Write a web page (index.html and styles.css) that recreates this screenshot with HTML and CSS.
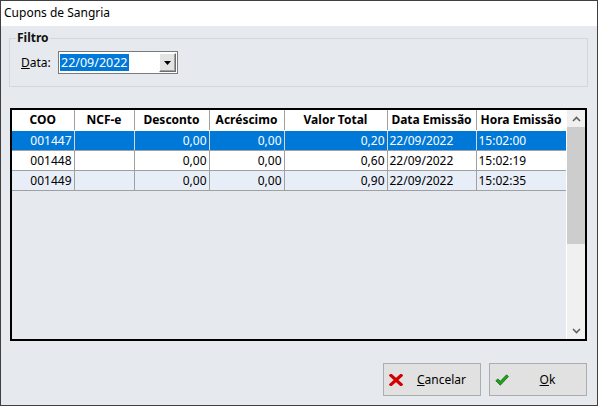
FILE: index.html
```html
<!DOCTYPE html>
<html lang="pt-BR">
<head>
<meta charset="utf-8">
<title>Cupons de Sangria</title>
<link rel="stylesheet" href="styles.css">
</head>
<body>
<div class="window">
  <div class="titlebar">Cupons de Sangria</div>
  <fieldset class="filter">
    <legend>Filtro</legend>
    <div class="field">
      <label class="label"><u>D</u>ata:</label>
      <div class="combo">
        <div class="combo-text"><span class="sel">22/09/2022</span></div>
        <div class="combo-btn">
          <svg width="7" height="4" viewBox="0 0 7 4"><path d="M0 0H7L3.5 4Z" fill="#000"/></svg>
        </div>
      </div>
    </div>
  </fieldset>
  <div class="grid">
    <div class="grid-body">
      <table class="table">
        <colgroup>
          <col class="c1"><col class="c2"><col class="c3"><col class="c4"><col class="c5"><col class="c6"><col class="c7">
        </colgroup>
        <thead>
          <tr>
            <th>COO</th><th>NCF-e</th><th>Desconto</th><th>Acréscimo</th><th>Valor Total</th><th>Data Emissão</th><th>Hora Emissão</th>
          </tr>
        </thead>
        <tbody>
          <tr class="selected">
            <td class="r">001447</td><td></td><td class="r">0,00</td><td class="r">0,00</td><td class="r">0,20</td><td>22/09/2022</td><td>15:02:00</td>
          </tr>
          <tr>
            <td class="r">001448</td><td></td><td class="r">0,00</td><td class="r">0,00</td><td class="r">0,60</td><td>22/09/2022</td><td>15:02:19</td>
          </tr>
          <tr class="alt">
            <td class="r">001449</td><td></td><td class="r">0,00</td><td class="r">0,00</td><td class="r">0,90</td><td>22/09/2022</td><td>15:02:35</td>
          </tr>
        </tbody>
      </table>
    </div>
    <div class="scrollbar">
      <div class="arrow">
        <svg width="9" height="6" viewBox="0 0 9 6"><path d="M1 5L4.5 1.5L8 5" fill="none" stroke="#606060" stroke-width="1.6"/></svg>
      </div>
      <div class="track"><div class="thumb"></div></div>
      <div class="arrow">
        <svg width="9" height="6" viewBox="0 0 9 6"><path d="M1 1L4.5 4.5L8 1" fill="none" stroke="#606060" stroke-width="1.6"/></svg>
      </div>
    </div>
  </div>
  <div class="buttons">
    <button class="btn" type="button">
      <svg class="icon" width="14" height="12" viewBox="0 0 14 12">
        <path d="M2 1.5L12 10.5M12 1.5L2 10.5" stroke="#d40000" stroke-width="3.2" stroke-linecap="square"/>
      </svg>
      <span class="btn-label"><u>C</u>ancelar</span>
    </button>
    <button class="btn" type="button">
      <svg class="icon" width="14" height="12" viewBox="0 0 14 12">
        <path d="M0.8 6.8L3 4.9L5.3 7.3L11.6 0.8L13.4 2.6L5.3 11.2Z" fill="#22a022" stroke="#0b6e0b" stroke-width="0.8" stroke-linejoin="round"/>
      </svg>
      <span class="btn-label"><u>O</u>k</span>
    </button>
  </div>
</div>
</body>
</html>
```

FILE: styles.css
```css
html, body {
  margin: 0;
  padding: 0;
}

body {
  font-family: "Noto Sans", "Open Sans", sans-serif;
  font-size: 12px;
  color: #000;
  background: #e6e9ee;
}

.window {
  width: 598px;
  height: 406px;
  box-sizing: border-box;
  border: 1px solid #404040;
  background: #e6e9ee;
  display: flex;
  flex-direction: column;
  overflow: hidden;
}

.titlebar {
  height: 25px;
  line-height: 24px;
  background: #fff;
  padding-left: 3px;
  font-size: 12px;
  color: #000;
}

.filter {
  margin: 5px 9px 0 8px;
  padding: 6px 11px 12px 11px;
  border: 1px solid #d3d6da;
  min-width: 0;
}

.filter legend {
  font-weight: bold;
  font-size: 12px;
  line-height: 14px;
  padding: 0 1px;
  margin-left: -5px;
  color: #111;
}

.field {
  display: flex;
  align-items: center;
}

.label {
  width: 37px;
  line-height: 16px;
  padding-top: 1px;
}

.combo {
  width: 120px;
  height: 23px;
  box-sizing: border-box;
  border: 1px solid #7a7a7a;
  background: #fff;
  display: flex;
  align-items: center;
  padding: 1px;
}

.combo-text {
  flex: 1;
  display: flex;
  align-items: center;
  padding-left: 0;
}

.sel {
  background: #0078d7;
  color: #fff;
  line-height: 17px;
  padding: 0 1px 0 1px;
  font-size: 12.5px;
}

.combo-btn {
  width: 17px;
  height: 19px;
  box-sizing: border-box;
  background: #e3e3e3;
  border-top: 1px solid #fff;
  border-left: 1px solid #fff;
  border-right: 1px solid #6d6d6d;
  border-bottom: 1px solid #6d6d6d;
  box-shadow: inset -1px -1px 0 #a0a0a0;
  display: flex;
  align-items: center;
  justify-content: center;
}

.grid {
  margin: 21px 10px 0 9px;
  height: 233px;
  box-sizing: border-box;
  border: 2px solid #000;
  display: flex;
  background: #e6e9ee;
}

.grid-body {
  width: 554px;
}

.table {
  width: 554px;
  table-layout: fixed;
  border-collapse: collapse;
  border-spacing: 0;
}

.c1 { width: 62px; }
.c2 { width: 60px; }
.c3 { width: 75px; }
.c4 { width: 75px; }
.c5 { width: 103px; }
.c6 { width: 89px; }
.c7 { width: 90px; }

.table th,
.table td {
  height: 19px;
  padding: 0 2px;
  border-right: 1px solid #a0a0a0;
  border-bottom: 1px solid #a0a0a0;
  white-space: nowrap;
  overflow: hidden;
  box-sizing: border-box;
  line-height: 19px;
}

.table th {
  background: #fff;
  font-weight: bold;
  text-align: center;
  border-bottom: 1px solid #fff;
  height: 20px;
}

.table th:last-child,
.table td:last-child {
  border-right: 1px solid #555;
}

.table td {
  background: #fff;
  text-align: left;
}

.table td.r {
  text-align: right;
}

.table tr.alt td {
  background: #e8eef8;
}

.table tr.selected td {
  background: #0078d7;
  color: #fff;
  border-right-color: #d8d8d8;
}

.table tr.selected td:last-child {
  border-right-color: #555;
}

.scrollbar {
  width: 19px;
  box-sizing: border-box;
  border-left: 1px solid #fff;
  background: #f0f0f0;
  display: flex;
  flex-direction: column;
}

.arrow {
  height: 17px;
  display: flex;
  align-items: center;
  justify-content: center;
}

.track {
  flex: 1;
}

.thumb {
  height: 117px;
  background: #cdcdcd;
}

.buttons {
  display: flex;
  justify-content: flex-end;
  gap: 8px;
  margin: 22px 10px 0 0;
}

.btn {
  width: 98px;
  height: 33px;
  box-sizing: border-box;
  border: 1px solid #adadad;
  background: #e1e1e1;
  display: flex;
  align-items: center;
  padding: 0 0 0 5px;
  font-family: "Noto Sans", "Open Sans", sans-serif;
  font-size: 12px;
  color: #000;
  margin: 0;
}

.icon {
  flex: none;
}

.btn-label {
  flex: 1;
  text-align: center;
}
```
